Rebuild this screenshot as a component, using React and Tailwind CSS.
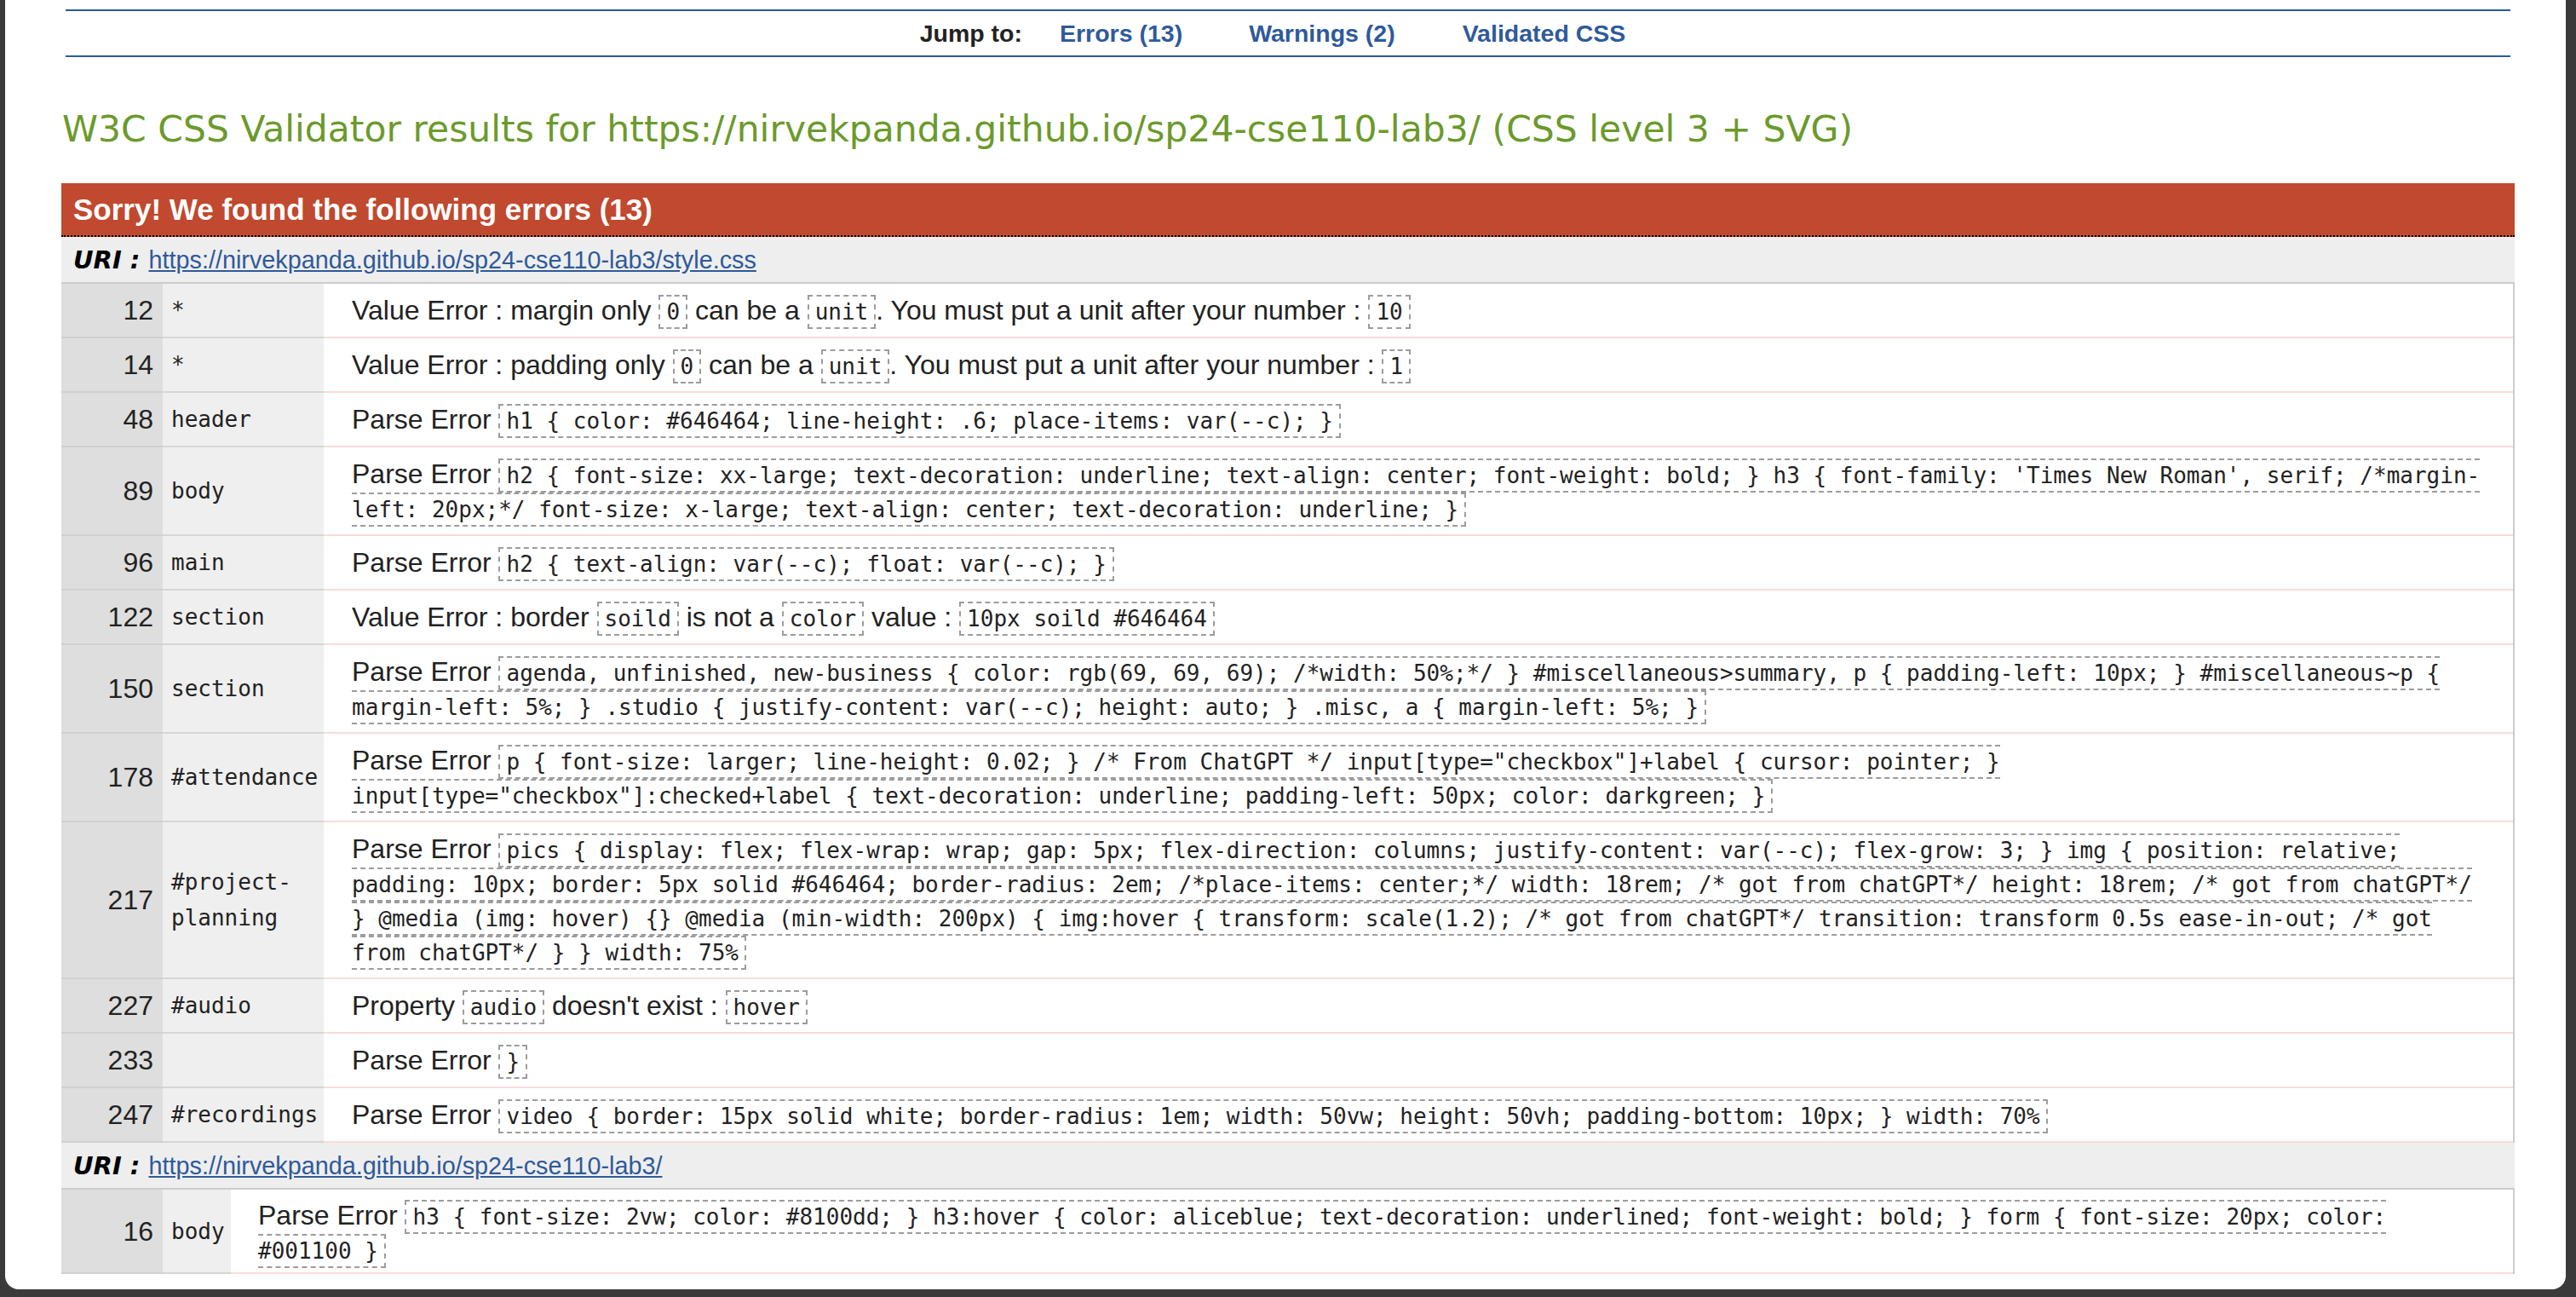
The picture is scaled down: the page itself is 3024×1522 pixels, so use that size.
import React from "react";

function Code({ children }) {
  return (
    <span className="font-['DejaVu_Sans_Mono',monospace] text-[26px] leading-[36px] border-2 border-dashed border-[#9c9c9c] px-[7px] py-[3px] text-[#222]">
      {children}
    </span>
  );
}

function Row({ num, sel, wide = true, pt = "pt-[11px]", pb = "pb-[11px]", children }) {
  return (
    <div className="flex">
      <div className="w-[119px] shrink-0 bg-[#dedede] border-b-2 border-[#d0d0d0] pr-[11px] flex items-center justify-end text-[32px] leading-[40px]">
        {num}
      </div>
      <div
        className={
          wide
            ? "w-[189px] shrink-0 bg-[#efefef] border-b-2 border-[#d6d6d6] pl-[10px] pr-[4px] flex items-center font-['DejaVu_Sans_Mono',monospace] text-[26px] leading-[42px]"
            : "w-[80px] shrink-0 bg-[#efefef] border-b-2 border-[#d6d6d6] pl-[10px] pr-[4px] flex items-center font-['DejaVu_Sans_Mono',monospace] text-[26px] leading-[42px]"
        }
      >
        {sel}
      </div>
      <div
        className={`flex-1 min-w-0 border-b-2 border-[#fadcdc] ${wide ? "pl-[33px]" : "pl-[32px]"} ${pt} ${pb} text-[32px] leading-[40px] whitespace-nowrap`}
      >
        {children}
      </div>
    </div>
  );
}

function UriRow({ href }) {
  return (
    <div className="h-[55px] bg-[#eeeeee] border-b-2 border-[#cccccc] pl-[14px] text-[28.8px] leading-[55px]">
      <span className="font-['DejaVu_Sans',Verdana,sans-serif] font-bold italic text-[29px] text-black">URI : </span>
      <a className="text-[#2f5a9a] underline">{href}</a>
    </div>
  );
}

export default function App() {
  return (
    <div className="w-[3024px] h-[1522px] bg-[#3a3a3a] pl-[6px] pr-[12px] pb-[9px] flex overflow-hidden">
      <div className="flex-1 bg-white rounded-b-[16px] overflow-hidden pl-[66px] pr-[60px] text-[#222] font-['Liberation_Sans',Arial,sans-serif]">
        {/* Jump nav */}
        <div className="mt-[11px] mx-[5px] border-y-2 border-[#2c5b97] h-[56px] flex items-center justify-center pr-[36px] font-bold text-[28.5px]">
          <span className="text-[#222]">Jump to:</span>
          <a className="ml-[44px] text-[#2f5a9a]">Errors (13)</a>
          <a className="ml-[78px] text-[#2f5a9a]">Warnings (2)</a>
          <a className="ml-[79px] text-[#2f5a9a]">Validated CSS</a>
        </div>

        {/* Title */}
        <h2 className="mt-[60px] ml-[1px] font-['DejaVu_Sans',Verdana,sans-serif] text-[42.5px] leading-[50px] text-[#6b9a2c]">
          W3C CSS Validator results for https://nirvekpanda.github.io/sp24-cse110-lab3/ (CSS level 3 + SVG)
        </h2>

        {/* Error header */}
        <div className="mt-[38px] h-[63px] bg-[#c0492f] border-b-2 border-dotted border-black pl-[14px] text-white font-bold text-[35px] leading-[61px]">
          Sorry! We found the following errors (13)
        </div>

        <UriRow href="https://nirvekpanda.github.io/sp24-cse110-lab3/style.css" />

        <div className="border-r-2 border-[#cccccc]">
          <Row num="12" sel="*">
            Value Error : margin only <Code>0</Code> can be a <Code>unit</Code>. You must put a unit after your number : <Code>10</Code>
          </Row>
          <Row num="14" sel="*">
            Value Error : padding only <Code>0</Code> can be a <Code>unit</Code>. You must put a unit after your number : <Code>1</Code>
          </Row>
          <Row num="48" sel="header">
            Parse Error <Code>h1 {"{"} color: #646464; line-height: .6; place-items: var(--c); {"}"}</Code>
          </Row>
          <Row num="89" sel="body">
            Parse Error{" "}
            <Code>
              h2 {"{"} font-size: xx-large; text-decoration: underline; text-align: center; font-weight: bold; {"}"} h3 {"{"} font-family: 'Times New Roman', serif; /*margin-
              <br />
              left: 20px;*/ font-size: x-large; text-align: center; text-decoration: underline; {"}"}
            </Code>
          </Row>
          <Row num="96" sel="main">
            Parse Error <Code>h2 {"{"} text-align: var(--c); float: var(--c); {"}"}</Code>
          </Row>
          <Row num="122" sel="section">
            Value Error : border <Code>soild</Code> is not a <Code>color</Code> value : <Code>10px soild #646464</Code>
          </Row>
          <Row num="150" sel="section">
            Parse Error{" "}
            <Code>
              agenda, unfinished, new-business {"{"} color: rgb(69, 69, 69); /*width: 50%;*/ {"}"} #miscellaneous&gt;summary, p {"{"} padding-left: 10px; {"}"} #miscellaneous~p {"{"}
              <br />
              margin-left: 5%; {"}"} .studio {"{"} justify-content: var(--c); height: auto; {"}"} .misc, a {"{"} margin-left: 5%; {"}"}
            </Code>
          </Row>
          <Row num="178" sel="#attendance">
            Parse Error{" "}
            <Code>
              p {"{"} font-size: larger; line-height: 0.02; {"}"} /* From ChatGPT */ input[type="checkbox"]+label {"{"} cursor: pointer; {"}"}
              <br />
              input[type="checkbox"]:checked+label {"{"} text-decoration: underline; padding-left: 50px; color: darkgreen; {"}"}
            </Code>
          </Row>
          <Row num="217" sel={<span className="whitespace-normal">#project-planning</span>}>
            Parse Error{" "}
            <Code>
              pics {"{"} display: flex; flex-wrap: wrap; gap: 5px; flex-direction: columns; justify-content: var(--c); flex-grow: 3; {"}"} img {"{"} position: relative;
              <br />
              padding: 10px; border: 5px solid #646464; border-radius: 2em; /*place-items: center;*/ width: 18rem; /* got from chatGPT*/ height: 18rem; /* got from chatGPT*/
              <br />
              {"}"} @media (img: hover) {"{}"} @media (min-width: 200px) {"{"} img:hover {"{"} transform: scale(1.2); /* got from chatGPT*/ transition: transform 0.5s ease-in-out; /* got
              <br />
              from chatGPT*/ {"}"} {"}"} width: 75%
            </Code>
          </Row>
          <Row num="227" sel="#audio">
            Property <Code>audio</Code> doesn't exist : <Code>hover</Code>
          </Row>
          <Row num="233" sel="">
            Parse Error <Code>{"}"}</Code>
          </Row>
          <Row num="247" sel="#recordings">
            Parse Error <Code>video {"{"} border: 15px solid white; border-radius: 1em; width: 50vw; height: 50vh; padding-bottom: 10px; {"}"} width: 70%</Code>
          </Row>
        </div>

        <UriRow href="https://nirvekpanda.github.io/sp24-cse110-lab3/" />

        <div className="border-r-2 border-[#cccccc]">
          <Row num="16" sel="body" wide={false} pt="pt-[10px]" pb="pb-[7px]">
            Parse Error{" "}
            <Code>
              h3 {"{"} font-size: 2vw; color: #8100dd; {"}"} h3:hover {"{"} color: aliceblue; text-decoration: underlined; font-weight: bold; {"}"} form {"{"} font-size: 20px; color:
              <br />
              #001100 {"}"}
            </Code>
          </Row>
        </div>
      </div>
    </div>
  );
}
